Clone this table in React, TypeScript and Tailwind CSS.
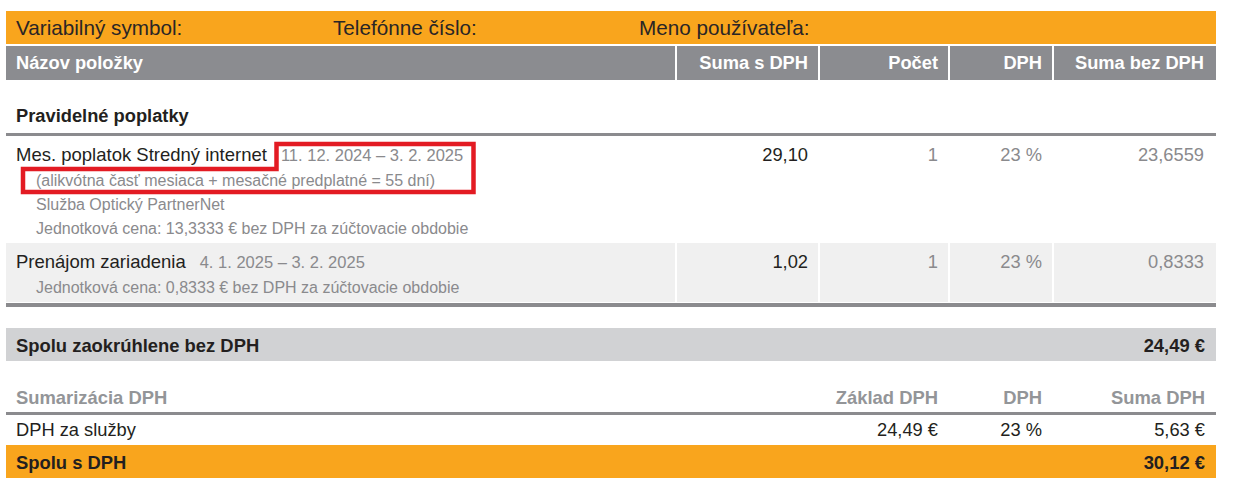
const FONT = "font-['Liberation_Sans',Arial,sans-serif]"

interface Item {
  name: string
  period: string
  notes: string[]
  total: string
  count: string
  vat: string
  net: string
  shaded?: boolean
}

const ITEMS: Item[] = [
  {
    name: 'Mes. poplatok Stredný internet',
    period: '11. 12. 2024 – 3. 2. 2025',
    notes: [
      '(alikvótna časť mesiaca + mesačné predplatné = 55 dní)',
      'Služba Optický PartnerNet',
      'Jednotková cena: 13,3333 € bez DPH za zúčtovacie obdobie',
    ],
    total: '29,10',
    count: '1',
    vat: '23 %',
    net: '23,6559',
  },
  {
    name: 'Prenájom zariadenia',
    period: '4. 1. 2025 – 3. 2. 2025',
    notes: ['Jednotková cena: 0,8333 € bez DPH za zúčtovacie obdobie'],
    total: '1,02',
    count: '1',
    vat: '23 %',
    net: '0,8333',
    shaded: true,
  },
]

function ItemRow({ item }: { item: Item }) {
  const bg = item.shaded ? 'bg-[#f0f0f0]' : 'bg-white'
  return (
    <div className="grid grid-cols-[669px_141px_128px_102px_162px] gap-x-[2px] bg-white">
      <div className={`${bg} pl-[10px] pt-[5px] pb-[2px]`}>
        <div className="flex h-[28px] items-baseline overflow-hidden text-[18.5px] leading-[28px]">
          <span>{item.name}</span>
          <span className="ml-[14px] text-[16.5px] leading-[28px] text-[#8a8a8d]">{item.period}</span>
        </div>
        {item.notes.map((n) => (
          <div key={n} className="h-[24px] pl-[20px] text-[16px] leading-[24px] text-[#8a8a8d]">
            {n}
          </div>
        ))}
      </div>
      <div className={`${bg} pt-[5px] pr-[10px] text-right text-[18.3px] leading-[28px]`}>{item.total}</div>
      <div className={`${bg} pt-[5px] pr-[10px] text-right text-[18.3px] leading-[28px] text-[#8a8a8d]`}>{item.count}</div>
      <div className={`${bg} pt-[5px] pr-[10px] text-right text-[18.3px] leading-[28px] text-[#8a8a8d]`}>{item.vat}</div>
      <div className={`${bg} pt-[5px] pr-[12px] text-right text-[18.3px] leading-[28px] text-[#8a8a8d]`}>{item.net}</div>
    </div>
  )
}

export default function App() {
  return (
    <div className={`relative min-h-[503px] w-[1239px] bg-white pt-[11px] text-[#231f20] ${FONT}`}>
      <div className="ml-[6px] w-[1210px]">
        {/* info bar */}
        <div className="flex h-[33px] items-center bg-[#f9a51d] pl-[10px] text-[20.7px] text-[#2a2526]">
          <span className="w-[317px]">Variabilný symbol:</span>
          <span className="w-[306px]">Telefónne číslo:</span>
          <span>Meno používateľa:</span>
        </div>

        {/* table header */}
        <div className="mt-[2px] grid h-[34px] grid-cols-[669px_141px_128px_102px_162px] gap-x-[2px] bg-white text-[18.3px] font-bold text-white">
          <div className="flex items-center bg-[#8b8c90] pl-[10px]">Názov položky</div>
          <div className="flex items-center justify-end bg-[#8b8c90] pr-[10px]">Suma s DPH</div>
          <div className="flex items-center justify-end bg-[#8b8c90] pr-[10px]">Počet</div>
          <div className="flex items-center justify-end bg-[#8b8c90] pr-[10px]">DPH</div>
          <div className="flex items-center justify-end bg-[#8b8c90] pr-[12px]">Suma bez DPH</div>
        </div>

        <div className="flex h-[53px] items-center pl-[10px] pt-[19px] text-[18.3px] font-bold">Pravidelné poplatky</div>
        <div className="h-[3px] bg-[#8b8b8e]" />

        {ITEMS.map((item) => (
          <ItemRow key={item.name} item={item} />
        ))}

        <div className="mt-[1px] h-[4px] bg-[#8b8b8e]" />

        {/* rounded total */}
        <div className="mt-[21px] flex h-[33px] items-center justify-between bg-[#d1d2d4] pl-[10px] pr-[11px] pt-[2px] text-[18.4px] font-bold">
          <span>Spolu zaokrúhlene bez DPH</span>
          <span>24,49 €</span>
        </div>

        {/* VAT summary */}
        <div className="grid h-[51px] grid-cols-[669px_141px_128px_102px_162px] items-center gap-x-[2px] pt-[22px] text-[18.4px] font-bold text-[#939598]">
          <div className="col-span-2 pl-[10px]">Sumarizácia DPH</div>
          <div className="pr-[10px] text-right">Základ DPH</div>
          <div className="pr-[10px] text-right">DPH</div>
          <div className="pr-[11px] text-right">Suma DPH</div>
        </div>
        <div className="h-[3px] bg-[#8b8b8e]" />
        <div className="grid h-[30px] grid-cols-[669px_141px_128px_102px_162px] items-center gap-x-[2px] text-[18.3px]">
          <div className="col-span-2 pl-[10px]">DPH za služby</div>
          <div className="pr-[10px] text-right">24,49 €</div>
          <div className="pr-[10px] text-right">23 %</div>
          <div className="pr-[11px] text-right">5,63 €</div>
        </div>
        <div className="flex h-[33px] items-center justify-between bg-[#f9a51d] pl-[10px] pr-[11px] pt-[2px] text-[18.4px] font-bold">
          <span>Spolu s DPH</span>
          <span>30,12 €</span>
        </div>
      </div>

      {/* red annotation outline */}
      <svg className="pointer-events-none absolute left-0 top-0" width="1239" height="503" viewBox="0 0 1239 503">
        <path
          d="M276.5 144 H473.5 V192 H23 V169 H276.5 Z"
          fill="none"
          stroke="#e31b23"
          strokeWidth="4.5"
          strokeLinejoin="miter"
        />
      </svg>
    </div>
  )
}
